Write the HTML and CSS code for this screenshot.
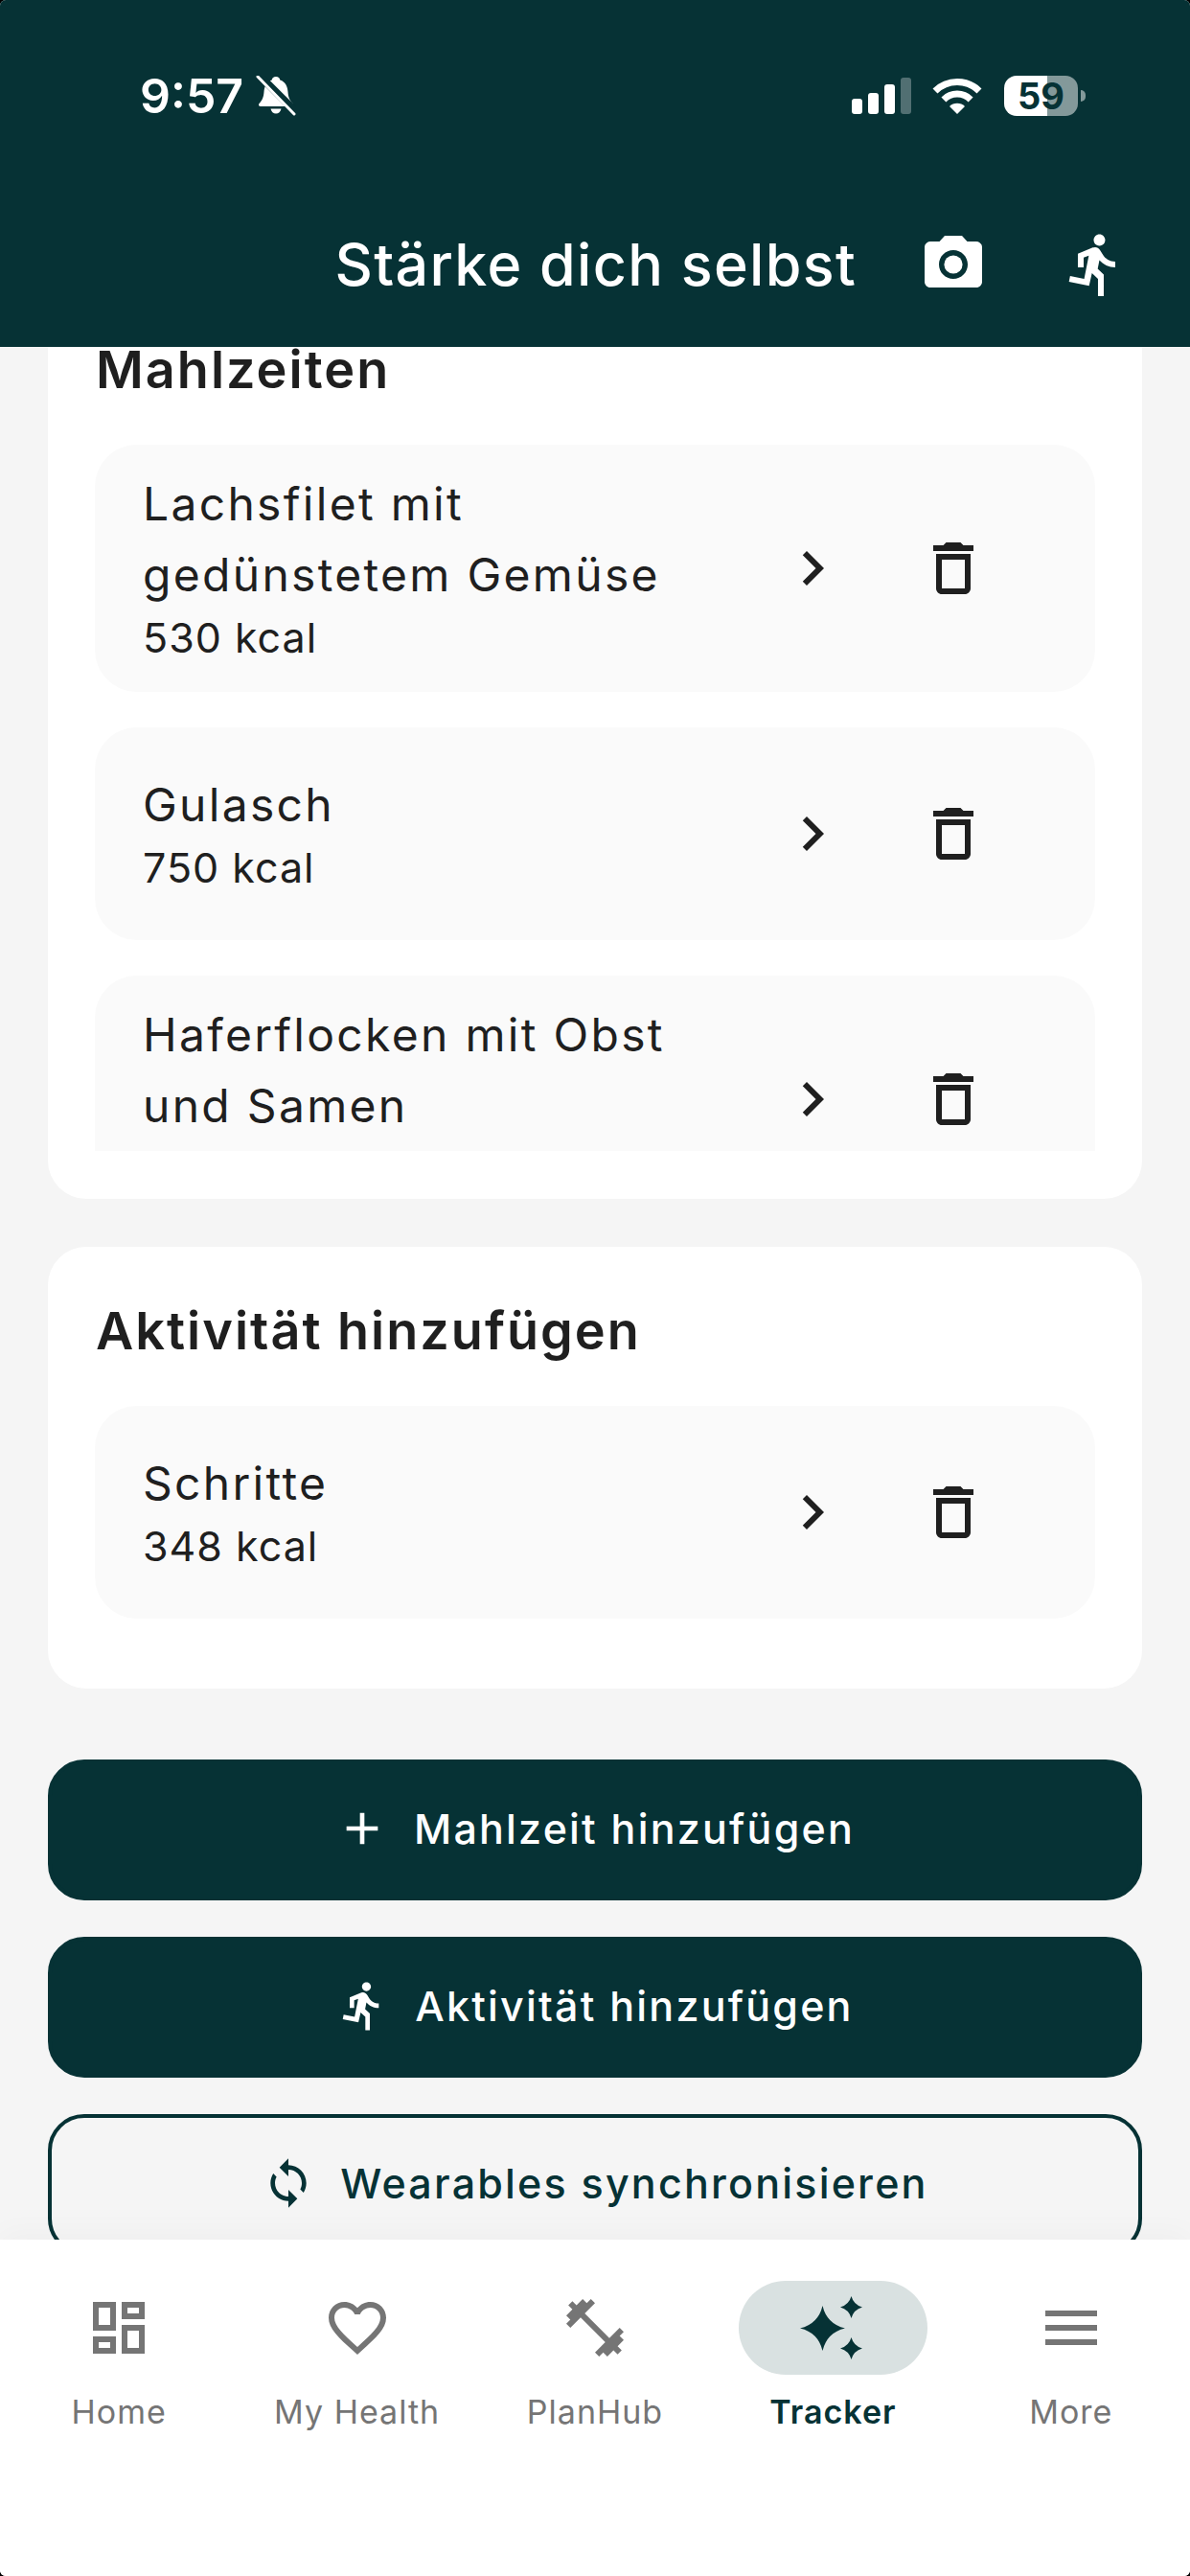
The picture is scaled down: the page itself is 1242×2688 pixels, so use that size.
FILE: index.html
```html
<!DOCTYPE html>
<html lang="de">

<head>
    <meta charset="UTF-8">
    <meta name="viewport" content="width=device-width, initial-scale=1.0">
    <title>Stärke dich selbst</title>
    <link rel="stylesheet" href="styles.css">
</head>

<body>
    <div class="page">
        <header class="header">
            <div class="status">
                <span class="time">9:57</span>
                <svg class="bell" viewBox="0 0 42 42">
                    <path fill="#fff" d="M21 1c2.500 0 4 1.500 4.300 3.500C31 6.500 33 11 33.500 17c.4 5 1.500 8.500 5 12 1 1.200.5 3-1.500 3H5c-2 0-2.500-1.800-1.500-3 3.500-3.500 4.600-7 5-12C9 11 11 6.500 16.700 4.500 17 2.500 18.500 1 21 1z" />
                    <path fill="#fff" d="M15.500 34.500h11c-.6 3-2.800 5-5.500 5s-4.900-2-5.500-5z" />
                    <path stroke="#063235" stroke-width="8" d="M3 -1L43 39" />
                    <path stroke="#fff" stroke-width="3" stroke-linecap="round" d="M2 1L40 40" />
                </svg>
                <div class="status-right">
                    <div class="signal">
                        <i class="bar bar1"></i>
                        <i class="bar bar2"></i>
                        <i class="bar bar3"></i>
                        <i class="bar bar4"></i>
                    </div>
                    <svg class="wifi" viewBox="0 0 52 38">
                        <path fill="none" stroke="#fff" stroke-width="7" d="M3 14A32.500 32.500 0 0 1 49 14" />
                        <path fill="none" stroke="#fff" stroke-width="7" d="M11.900 22.900A20 20 0 0 1 40.100 22.900" />
                        <path fill="#fff" d="M26 38L18 30A11.300 11.300 0 0 1 34 30Z" />
                    </svg>
                    <div class="battery">59</div>
                    <i class="battery-nub"></i>
                </div>
            </div>
            <div class="titlebar">
                <h1>Stärke dich selbst</h1>
                <svg class="icon" viewBox="0 0 24 24">
                    <circle cx="12" cy="12" r="3.200" />
                    <path d="M20 4h-3.170L15 2H9L7.170 4H4c-1.100 0-2 .9-2 2v12c0 1.100.9 2 2 2h16c1.100 0 2-.9 2-2V6c0-1.100-.9-2-2-2zm-8 13c-2.760 0-5-2.240-5-5s2.240-5 5-5 5 2.240 5 5-2.240 5-5 5z" />
                </svg>
                <svg class="icon" viewBox="0 0 24 24">
                    <path d="M13.490 5.480c1.100 0 2-.9 2-2s-.9-2-2-2-2 .9-2 2 .9 2 2 2zm-3.600 13.900l1-4.400 2.100 2v6h2v-7.500l-2.100-2 .6-3c1.300 1.500 3.300 2.500 5.500 2.500v-2c-1.900 0-3.500-1-4.300-2.400l-1-1.600c-.4-.6-1-1-1.700-1-.3 0-.5.1-.8.1l-5.200 2.200v4.700h2v-3.400l1.800-.7-1.600 8.100-4.900-1-.4 2 7 1.400z" />
                </svg>
            </div>
        </header>

        <main class="content">
            <div class="scroll">
                <section class="card">
                    <h2>Mahlzeiten</h2>
                    <div class="list list-clipped">
                        <div class="item">
                            <div class="item-text">
                                <div class="item-name">Lachsfilet mit<br>gedünstetem Gemüse</div>
                                <div class="item-kcal">530 kcal</div>
                            </div>
                            <svg class="icon" viewBox="0 0 24 24"><path d="M10 6L8.590 7.410 13.170 12l-4.580 4.590L10 18l6-6z" /></svg>
                            <svg class="icon" viewBox="0 0 24 24"><path d="M6 19c0 1.100.9 2 2 2h8c1.100 0 2-.9 2-2V7H6v12zM8 9h8v10H8V9zm7.500-5l-1-1h-5l-1 1H5v2h14V4z" /></svg>
                        </div>
                        <div class="item">
                            <div class="item-text">
                                <div class="item-name">Gulasch</div>
                                <div class="item-kcal">750 kcal</div>
                            </div>
                            <svg class="icon" viewBox="0 0 24 24"><path d="M10 6L8.590 7.410 13.170 12l-4.580 4.590L10 18l6-6z" /></svg>
                            <svg class="icon" viewBox="0 0 24 24"><path d="M6 19c0 1.100.9 2 2 2h8c1.100 0 2-.9 2-2V7H6v12zM8 9h8v10H8V9zm7.500-5l-1-1h-5l-1 1H5v2h14V4z" /></svg>
                        </div>
                        <div class="item">
                            <div class="item-text">
                                <div class="item-name">Haferflocken mit Obst<br>und Samen</div>
                                <div class="item-kcal">&nbsp;</div>
                            </div>
                            <svg class="icon" viewBox="0 0 24 24"><path d="M10 6L8.590 7.410 13.170 12l-4.580 4.590L10 18l6-6z" /></svg>
                            <svg class="icon" viewBox="0 0 24 24"><path d="M6 19c0 1.100.9 2 2 2h8c1.100 0 2-.9 2-2V7H6v12zM8 9h8v10H8V9zm7.500-5l-1-1h-5l-1 1H5v2h14V4z" /></svg>
                        </div>
                    </div>
                </section>

                <section class="card card-activity">
                    <h2>Aktivität hinzufügen</h2>
                    <div class="list">
                        <div class="item">
                            <div class="item-text">
                                <div class="item-name">Schritte</div>
                                <div class="item-kcal">348 kcal</div>
                            </div>
                            <svg class="icon" viewBox="0 0 24 24"><path d="M10 6L8.590 7.410 13.170 12l-4.580 4.590L10 18l6-6z" /></svg>
                            <svg class="icon" viewBox="0 0 24 24"><path d="M6 19c0 1.100.9 2 2 2h8c1.100 0 2-.9 2-2V7H6v12zM8 9h8v10H8V9zm7.500-5l-1-1h-5l-1 1H5v2h14V4z" /></svg>
                        </div>
                    </div>
                </section>

                <div class="actions">
                    <button class="btn">
                        <svg class="btn-icon" viewBox="0 0 24 24"><path d="M19 13h-6v6h-2v-6H5v-2h6V5h2v6h6v2z" /></svg>
                        Mahlzeit hinzufügen
                    </button>
                    <button class="btn">
                        <svg class="btn-icon" viewBox="0 0 24 24"><path d="M13.490 5.480c1.100 0 2-.9 2-2s-.9-2-2-2-2 .9-2 2 .9 2 2 2zm-3.600 13.900l1-4.400 2.100 2v6h2v-7.500l-2.100-2 .6-3c1.300 1.500 3.300 2.500 5.500 2.500v-2c-1.900 0-3.500-1-4.300-2.400l-1-1.600c-.4-.6-1-1-1.700-1-.3 0-.5.1-.8.1l-5.200 2.200v4.700h2v-3.400l1.800-.7-1.600 8.100-4.900-1-.4 2 7 1.400z" /></svg>
                        Aktivität hinzufügen
                    </button>
                    <button class="btn btn-outline">
                        <svg class="btn-icon" viewBox="0 0 24 24"><path d="M12 4V1L8 5l4 4V6c3.310 0 6 2.690 6 6 0 1.010-.25 1.970-.7 2.800l1.460 1.460C19.540 15.030 20 13.570 20 12c0-4.420-3.580-8-8-8zm0 14c-3.310 0-6-2.690-6-6 0-1.010.25-1.970.7-2.800L5.240 7.740C4.460 8.970 4 10.430 4 12c0 4.420 3.580 8 8 8v3l4-4-4-4v3z" /></svg>
                        Wearables synchronisieren
                    </button>
                </div>
            </div>
        </main>

        <nav class="nav">
            <div class="nav-item">
                <div class="nav-icon">
                    <svg class="icon" viewBox="0 0 24 24"><path d="M19 5v2h-4V5h4M9 5v6H5V5h4m10 8v6h-4v-6h4M9 17v2H5v-2h4M21 3h-8v6h8V3zM11 3H3v10h8V3zm10 8h-8v10h8V11zm-10 4H3v6h8v-6z" /></svg>
                </div>
                <span>Home</span>
            </div>
            <div class="nav-item">
                <div class="nav-icon">
                    <svg class="icon" viewBox="0 0 24 24"><path d="M16.500 3c-1.740 0-3.410.81-4.500 2.090C10.910 3.810 9.240 3 7.500 3 4.420 3 2 5.420 2 8.500c0 3.780 3.400 6.860 8.550 11.540L12 21.350l1.450-1.320C18.600 15.360 22 12.280 22 8.500 22 5.420 19.580 3 16.500 3zm-4.400 15.550l-.1.1-.1-.1C7.140 14.240 4 11.390 4 8.500 4 6.500 5.500 5 7.500 5c1.540 0 3.040.99 3.570 2.360h1.870C13.460 5.990 14.960 5 16.500 5c2 0 3.500 1.500 3.500 3.500 0 2.890-3.140 5.740-7.900 10.050z" /></svg>
                </div>
                <span>My Health</span>
            </div>
            <div class="nav-item">
                <div class="nav-icon">
                    <svg class="icon" viewBox="0 0 24 24"><path d="M20.570 14.860L22 13.430 20.570 12 17 15.570 8.430 7 12 3.430 10.570 2 9.140 3.430 7.710 2 5.570 4.140 4.140 2.710 2.710 4.140l1.430 1.430L2 7.710l1.430 1.430L2 10.570 3.430 12 7 8.430 15.570 17 12 20.570 13.430 22l1.430-1.430L16.290 22l2.140-2.140 1.430 1.430 1.430-1.430-1.430-1.430L22 16.290z" /></svg>
                </div>
                <span>PlanHub</span>
            </div>
            <div class="nav-item nav-active">
                <div class="nav-icon">
                    <svg class="icon" viewBox="0 0 72 72">
                        <path d="M25.500 13Q30 32 49 36.500Q30 41 25.500 60Q21 41 2 36.500Q21 32 25.500 13z" />
                        <path d="M55.500 3Q58 12 67 14.500Q58 17 55.500 26Q53 17 44 14.500Q53 12 55.500 3z" />
                        <path d="M55.500 46Q58 55 67 57.500Q58 60 55.500 69Q53 60 44 57.500Q53 55 55.500 46z" />
                    </svg>
                </div>
                <span>Tracker</span>
            </div>
            <div class="nav-item">
                <div class="nav-icon">
                    <svg class="icon" viewBox="0 0 24 24"><path d="M3 18h18v-2H3v2zm0-5h18v-2H3v2zm0-7v2h18V6H3z" /></svg>
                </div>
                <span>More</span>
            </div>
        </nav>
    </div>
</body>

</html>
```
FILE: styles.css
```css
* {
    margin: 0;
    padding: 0;
    box-sizing: border-box;
}

html,
body {
    height: 100%;
    background: #000;
}

body {
    font-family: Inter, "Noto Sans", sans-serif;
    color: #1f1f1f;
}

.page {
    display: flex;
    flex-direction: column;
    height: 2688px;
    overflow: hidden;
    background: #f5f5f5;
    border-radius: 6px;
}

.icon {
    display: block;
    flex: none;
    width: 72px;
    height: 72px;
    fill: #1f1f1f;
}

/* header */
.header {
    flex: none;
    height: 362px;
    padding-top: 79px;
    background: #063235;
    color: #fff;
}

.header .icon {
    fill: #fff;
}

.status {
    display: flex;
    align-items: center;
    height: 42px;
    padding: 0 109px 0 146px;
}

.time {
    font-size: 50px;
    font-weight: 600;
    line-height: 42px;
}

.bell {
    width: 42px;
    height: 42px;
    margin-left: 13px;
}

.status-right {
    display: flex;
    align-items: center;
    margin-left: auto;
}

.signal {
    display: flex;
    align-items: flex-end;
    gap: 6px;
    height: 38px;
}

.bar {
    display: block;
    width: 11px;
    border-radius: 3px;
    background: #fff;
}

.bar1 {
    height: 16px;
}

.bar2 {
    height: 22px;
}

.bar3 {
    height: 31px;
}

.bar4 {
    height: 38px;
    background: rgba(255, 255, 255, .3);
}

.wifi {
    width: 52px;
    height: 38px;
    margin-left: 22px;
}

.battery {
    display: flex;
    align-items: center;
    justify-content: center;
    width: 77px;
    height: 42px;
    margin-left: 23px;
    border-radius: 13px;
    background: linear-gradient(90deg, #fff 59%, rgba(255, 255, 255, .5) 59%);
    color: #063235;
    font-size: 38px;
    font-weight: 700;
}

.battery-nub {
    width: 5px;
    height: 12px;
    margin-left: 3px;
    border-radius: 0 6px 6px 0;
    background: rgba(255, 255, 255, .5);
}

.titlebar {
    display: flex;
    align-items: center;
    justify-content: flex-end;
    gap: 76px;
    margin-top: 119px;
    padding-right: 63px;
}

h1 {
    margin-right: -11px;
    font-size: 61px;
    font-weight: 500;
    line-height: 72px;
    letter-spacing: 1.300px;
}

/* scrolling part */
.content {
    flex: 1;
    min-height: 0;
    overflow: hidden;
}

.scroll {
    margin-top: -64px;
    padding: 0 50px;
}

.card {
    margin-bottom: 50px;
    padding: 55px 49px 50px;
    border-radius: 40px;
    background: #fff;
}

.card-activity {
    padding-bottom: 73px;
}

h2 {
    margin-bottom: 45px;
    padding-left: 1px;
    font-size: 54px;
    font-weight: 600;
    line-height: 66px;
    letter-spacing: 2px;
}

.list {
    display: flex;
    flex-direction: column;
    gap: 37px;
}

.list-clipped {
    height: 737px;
    overflow: hidden;
}

.item {
    display: flex;
    flex: none;
    align-items: center;
    gap: 75px;
    min-height: 222px;
    padding: 29px 112px 29px 50px;
    border-radius: 44px;
    background: #fafafa;
}

.item-text {
    flex: 1;
    margin-top: -4px;
}

.item-name {
    font-size: 48px;
    line-height: 74px;
    letter-spacing: 2.300px;
}

.item-kcal {
    font-size: 43px;
    line-height: 56px;
    letter-spacing: 1px;
}

/* buttons */
.actions {
    display: flex;
    flex-direction: column;
    gap: 38px;
    margin-top: 74px;
}

.btn {
    display: flex;
    flex: none;
    align-items: center;
    justify-content: center;
    gap: 26px;
    height: 147px;
    padding-bottom: 3px;
    border: 4px solid #063235;
    border-radius: 38px;
    background: #063235;
    color: #fff;
    font-family: inherit;
    font-size: 43px;
    font-weight: 500;
    letter-spacing: 2.200px;
}

.btn-icon {
    width: 56px;
    height: 56px;
    fill: #fff;
}

.btn-outline {
    background: transparent;
    color: #063235;
}

.btn-outline .btn-icon {
    fill: #063235;
}

/* bottom nav */
.nav {
    position: relative;
    display: flex;
    flex: none;
    height: 351px;
    padding-top: 43px;
    background: #fff;
    box-shadow: 0 -6px 30px rgba(0, 0, 0, .03);
}

.nav-item {
    display: flex;
    flex: 1;
    flex-direction: column;
    align-items: center;
    color: #757575;
    font-size: 34px;
    letter-spacing: 1px;
}

.nav-item .icon {
    fill: #757575;
}

.nav-icon {
    display: flex;
    align-items: center;
    justify-content: center;
    width: 197px;
    height: 98px;
    margin-bottom: 18px;
    border-radius: 49px;
}

.nav-active {
    color: #063235;
    font-weight: 600;
}

.nav-active .nav-icon {
    background: #d9e1e1;
}

.nav-active .icon {
    fill: #063235;
}
```
